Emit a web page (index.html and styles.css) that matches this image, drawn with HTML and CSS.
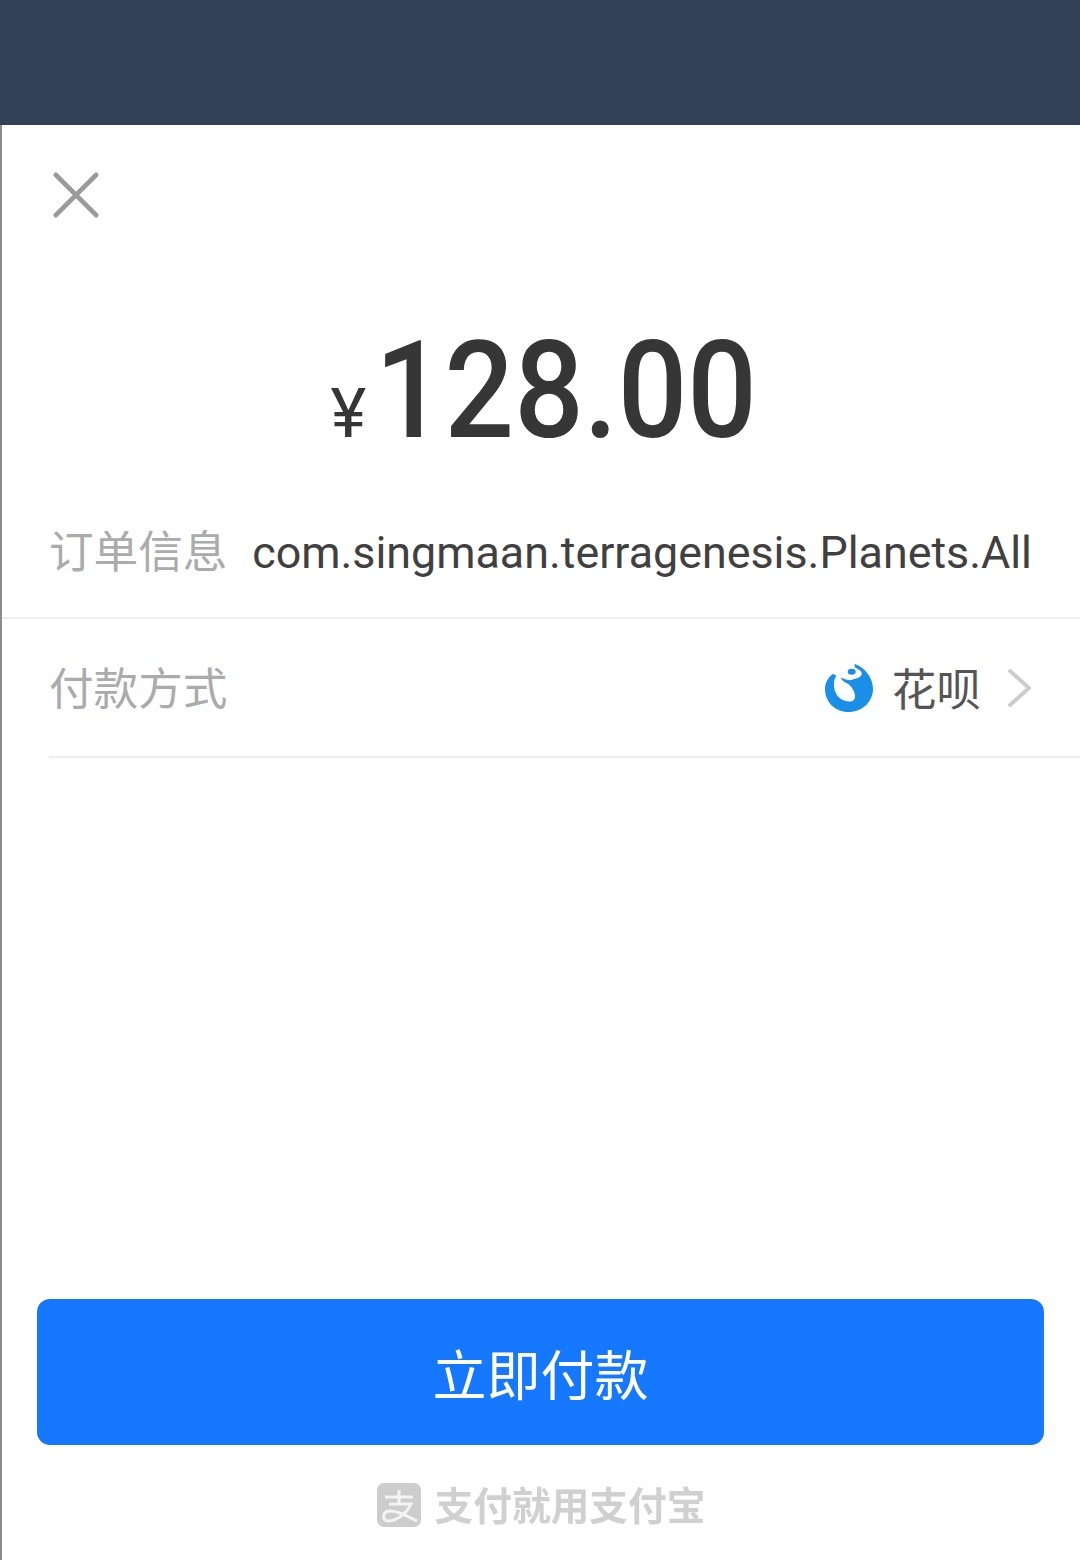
FILE: index.html
```html
<!DOCTYPE html>
<html lang="zh-CN">
<head>
<meta charset="utf-8">
<title>立即付款</title>
<link rel="stylesheet" href="styles.css">
</head>
<body>
<div class="page">
  <header class="topbar"></header>
  <main class="sheet">
    <div class="close-row">
      <svg class="close-icon" width="50" height="50" viewBox="0 0 50 50" aria-label="关闭"><path d="M4 4 L46 46 M46 4 L4 46" fill="none" stroke="#9a9a9a" stroke-width="5" stroke-linecap="round"/></svg>
    </div>
    <div class="amount"><span class="currency">¥</span><span class="value">128.00</span></div>
    <div class="row row-info">
      <span class="label">订单信息</span>
      <span class="info-value">com.singmaan.terragenesis.Planets.All</span>
    </div>
    <div class="row row-pay">
      <span class="label">付款方式</span>
      <span class="pay-method">
        <svg class="huabei-icon" width="48" height="48" viewBox="0 0 48 48" aria-hidden="true">
          <path fill="#1a8fe8" d="M7.700 10 C2.500 14 0 19 0 25 C0 38 10 48 23.500 48 C37 48 48 38 48 25 C48 14 40.500 4 30 0 C29 1.500 29.500 3 31 4 C34 5.500 36.700 7 36.700 9.500 C36.700 12.500 33.500 14 31 14.500 C28 15.500 26 16.500 23.300 16 C20.500 15.500 18 14.500 15.700 13.500 C16.500 16 19 18 22.300 19.500 C26 21.500 29 26 30 31 C30.500 34.500 28.500 37 26 37.500 C22 38 16.500 36.500 13 32.500 C10 29 8.500 24 9 19 C9.300 16 10 13.500 11.500 12 C10.500 11 9 10.200 7.700 10 Z"/>
          <ellipse cx="26.700" cy="7.700" rx="4" ry="3" fill="#1a8fe8"/>
        </svg>
        <span class="pay-name">花呗</span>
        <svg class="chevron" width="26" height="42" viewBox="0 0 26 42" aria-hidden="true"><path d="M3 4 L22 21 L3 38" fill="none" stroke="#cccccc" stroke-width="4" stroke-linecap="round" stroke-linejoin="round"/></svg>
      </span>
    </div>
    <div class="spacer"></div>
    <button class="pay-button" type="button">立即付款</button>
    <footer class="brand">
      <svg class="brand-logo" width="44" height="44" viewBox="0 0 44 44" aria-hidden="true">
        <rect width="44" height="44" rx="7" fill="#cdcdcd"/>
        <path d="M8 14 H36 M22 7 V21 M12 21 H34 C30 30 20 38 11 38 C5 38 5 29 12 28 C19 27 29 32 40 38" fill="none" stroke="#f4f4f4" stroke-width="3"/>
      </svg>
      <span class="brand-text">支付就用支付宝</span>
    </footer>
  </main>
</div>
</body>
</html>
```
FILE: styles.css
```css
* { box-sizing: border-box; }
html, body { margin: 0; padding: 0; background: #fff; }
body { font-family: "Noto Sans CJK SC", Roboto, sans-serif; }
.page { width: 1080px; height: 1560px; display: flex; flex-direction: column; overflow: hidden; }
.topbar { height: 125px; flex: none; background: #344058; }
.sheet { flex: 1; display: flex; flex-direction: column; background: #fff; border-left: 2px solid #8c8c8c; }
.close-row { height: 140px; flex: none; padding: 46px 0 0 50px; }
.close-icon { display: block; width: 48px; height: 48px; }
.amount { height: 220px; flex: none; display: flex; justify-content: center; align-items: baseline; padding: 61px 0 0 0; color: #363636; font-family: Roboto, sans-serif; }
.currency { font-size: 68px; font-weight: 400; margin-right: 9px; line-height: 130px; }
.value { display: inline-block; font-size: 136px; font-weight: 500; line-height: 130px; transform: scaleX(0.9); transform-origin: left center; margin-right: -48px; }
.row { display: flex; align-items: center; justify-content: space-between; flex: none; }
.row-info { height: 134px; padding: 0 48px 0 47px; border-bottom: 2px solid #efefef; }
.row-pay { height: 139px; margin-left: 47px; padding-right: 47px; border-bottom: 2px solid #efefef; }
.label { font-size: 44.600px; font-weight: 400; color: #ababab; line-height: 1; }
.row-info .label { margin-top: -4px; }
.row-pay .label { margin-top: -2px; }
.info-value { font-family: Roboto, sans-serif; font-size: 44.800px; color: #404040; margin-top: 3px; }
.pay-method { display: flex; align-items: center; }
.huabei-icon { display: block; }
.pay-name { font-size: 44.600px; font-weight: 400; color: #555; margin-left: 19px; line-height: 1; }
.chevron { display: block; margin-left: 26px; }
.spacer { flex: 1; }
.pay-button { flex: none; height: 146px; margin: 0 36px 0 35px; border: none; border-radius: 13px; background: #1677ff; color: #fff; font-family: inherit; font-size: 54px; font-weight: 400; }
.brand { height: 115px; flex: none; display: flex; justify-content: center; align-items: center; padding: 2px 0 0 0; gap: 14px; filter: blur(0.7px); }
.brand-logo { display: block; margin-top: 3px; }
.brand-text { font-size: 38.700px; font-weight: 700; color: #d0d0d0; line-height: 1; }
```
